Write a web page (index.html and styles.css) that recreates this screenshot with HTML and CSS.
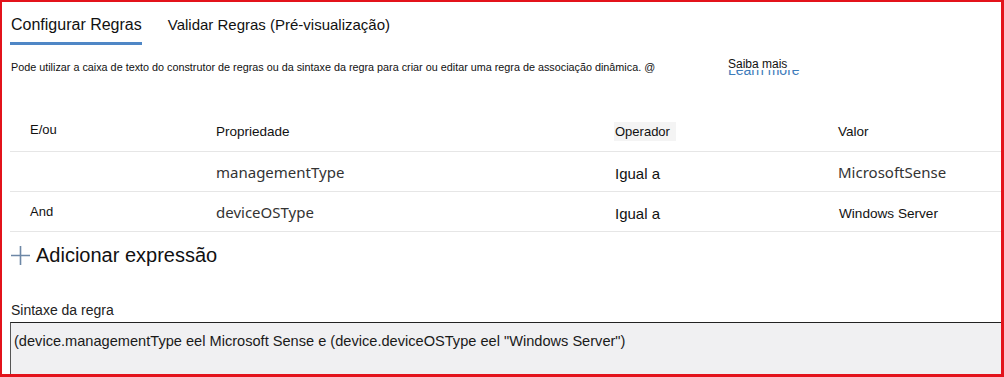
FILE: index.html
```html
<!DOCTYPE html>
<html lang="pt">
<head>
    <meta charset="UTF-8">
    <title>Regras de associação dinâmica</title>
    <link rel="stylesheet" href="styles.css">
</head>
<body>

    <div class="frame">
        <!-- Tabs -->
        <div class="tabs">
            <span class="tab active">Configurar Regras</span>
            <span class="tab">Validar Regras (Pré-visualização)</span>
        </div>

        <div class="intro">
            <span class="intro-text">Pode utilizar a caixa de texto do construtor de regras ou da sintaxe da regra para criar ou editar uma regra de associação dinâmica. @</span>
            <span class="learn">
                <span class="learn-en">Learn more</span>
                <span class="learn-pt">Saiba mais</span>
            </span>
        </div>

        <!-- Rule builder -->
        <div class="rules">
            <div class="row head">
                <div class="cell first andor">E/ou</div>
                <div class="cell">Propriedade</div>
                <div class="cell"><span class="op-head">Operador</span></div>
                <div class="cell">Valor</div>
            </div>
            <div class="row">
                <div class="cell first"></div>
                <div class="cell prop">managementType</div>
                <div class="cell op">Igual a</div>
                <div class="cell prop">MicrosoftSense</div>
            </div>
            <div class="row">
                <div class="cell first">And</div>
                <div class="cell prop">deviceOSType</div>
                <div class="cell op">Igual a</div>
                <div class="cell small">Windows Server</div>
            </div>
        </div>

        <div class="add">
            <svg class="plus" width="19" height="19" viewBox="0 0 19 19">
                <path d="M9.5 0 V19 M0 9.5 H19" stroke="#6d87a6" stroke-width="1.6" fill="none"/>
            </svg>
            <span>Adicionar expressão</span>
        </div>

        <div class="syntax-label">Sintaxe da regra</div>
        <div class="syntax">(device.managementType eel Microsoft Sense e (device.deviceOSType eel "Windows Server")</div>
    </div>

</body>
</html>
```

FILE: styles.css
```css
* {
    margin: 0;
    padding: 0;
    box-sizing: border-box;
}

body {
    font-family: 'Liberation Sans', Arial, sans-serif;
    color: #111;
    background: #fff;
}

.frame {
    height: 377px;
    border: 2px solid #e3131b;
    border-right-width: 3px;
    border-bottom-width: 3px;
    padding-left: 8px;
    overflow: hidden;
}

/* Tabs */
.tabs {
    display: flex;
    gap: 25px;
    padding-top: 14px;
}

.tab {
    font-size: 15px;
    padding: 0 0 9px 1px;
    border-bottom: 3px solid transparent;
}

.tab.active {
    font-size: 16px;
    padding-bottom: 8px;
    border-bottom-color: #4f87c6;
}

.intro {
    display: flex;
    align-items: flex-start;
    margin-top: 16px;
    padding-left: 1px;
    font-size: 10.8px;
}

.intro-text {
    width: 717px;
}

.learn {
    position: relative;
    margin-top: 2px;
    font-size: 14px;
    line-height: 14px;
}

.learn-en {
    color: #3e7cba;
}

.learn-pt {
    position: absolute;
    left: 0;
    top: -5px;
    height: 12px;
    width: 84px;
    background: #fff;
    font-size: 12px;
    line-height: 13px;
    color: #111;
}

/* Rules table */
.rules {
    margin-top: 34px;
}

.row {
    display: grid;
    grid-template-columns: 206px 398px 224px 1fr;
    align-items: center;
    height: 40px;
    border-bottom: 1px solid #e6e6e6;
}

.row.head {
    height: 41px;
    font-size: 13.5px;
}

.cell.first {
    padding-left: 20px;
    font-size: 13px;
}

.andor {
    margin-top: -3px;
}

.op-head {
    display: inline-block;
    background: #f4f4f4;
    padding: 2px 6px 2px 1px;
    font-size: 13px;
}

.prop {
    font-family: 'Noto Sans', sans-serif;
    font-size: 15px;
    color: #333;
}

.op {
    font-size: 15px;
    padding-left: 1px;
    padding-top: 4px;
}

.small {
    font-size: 13.6px;
    padding-left: 1px;
    padding-top: 3px;
}

/* Add expression */
.add {
    display: flex;
    align-items: center;
    gap: 6px;
    margin-top: 12px;
    padding-left: 1px;
    font-size: 20px;
}

.syntax-label {
    margin-top: 35px;
    padding-left: 1px;
    font-size: 14px;
    color: #222;
}

.syntax {
    margin-top: 4px;
    height: 60px;
    border-top: 1px solid #222;
    border-left: 1px solid #555;
    background: #f0f0f2;
    padding: 10px 0 0 3px;
    font-size: 14.6px;
    color: #1a1a1a;
    white-space: nowrap;
}
```
